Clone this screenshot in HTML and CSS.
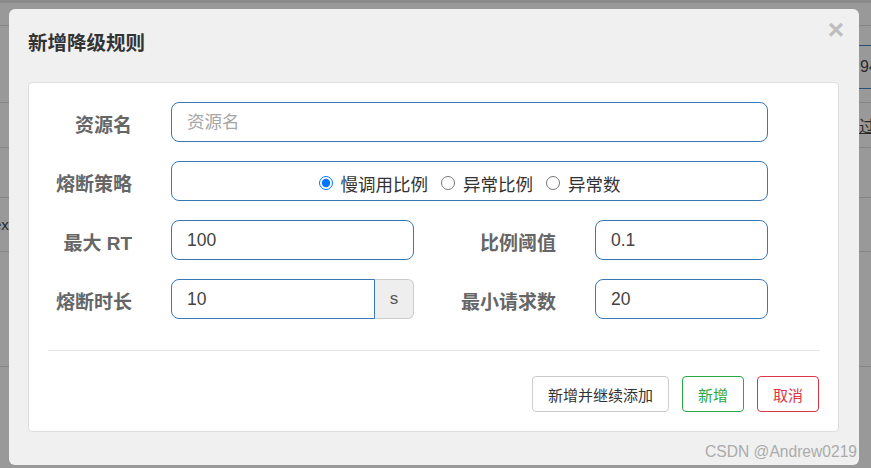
FILE: index.html
```html
<!DOCTYPE html>
<html lang="zh-CN">
<head>
<meta charset="utf-8">
<title>新增降级规则</title>
<link rel="stylesheet" href="styles.css">
</head>
<body>
<div class="page">
  <div class="bg">
    <div class="bg-strip"></div>
    <div class="bg-row h-a"></div>
    <div class="bg-row h-b"><span></span><span class="bg-box">94</span></div>
    <div class="bg-row h-c"><span></span><span class="bg-link">过</span></div>
    <div class="bg-row h-d"></div>
    <div class="bg-row h-e"><span class="bg-left">ex</span><span></span></div>
    <div class="bg-row h-f"></div>
    <div class="bg-row h-g"></div>
  </div>

  <div class="modal">
    <div class="modal-header">
      <h4 class="modal-title">新增降级规则</h4>
      <span class="close">×</span>
    </div>
    <div class="panel">
      <div class="form-grid">
        <label class="lbl">资源名</label>
        <input class="ctl span3" type="text" placeholder="资源名">

        <label class="lbl">熔断策略</label>
        <div class="ctl span3 radio-box">
          <label class="radio"><input type="radio" name="grade" checked><span>慢调用比例</span></label>
          <label class="radio"><input type="radio" name="grade"><span>异常比例</span></label>
          <label class="radio"><input type="radio" name="grade"><span>异常数</span></label>
        </div>

        <label class="lbl">最大 RT</label>
        <input class="ctl" type="text" value="100">
        <label class="lbl">比例阈值</label>
        <input class="ctl" type="text" value="0.1">

        <label class="lbl">熔断时长</label>
        <div class="input-group">
          <input class="ctl grp" type="text" value="10">
          <span class="addon">s</span>
        </div>
        <label class="lbl">最小请求数</label>
        <input class="ctl" type="text" value="20">
      </div>
      <hr class="divider">
      <div class="actions">
        <button class="btn btn-default" type="button">新增并继续添加</button>
        <button class="btn btn-success" type="button">新增</button>
        <button class="btn btn-danger" type="button">取消</button>
      </div>
    </div>
  </div>

  <div class="watermark">CSDN @Andrew0219</div>
</div>
</body>
</html>
```

FILE: styles.css
```css
html, body {
  margin: 0;
  padding: 0;
}
body {
  width: 871px;
  height: 468px;
  overflow: hidden;
  font-family: "Liberation Sans", "Noto Sans CJK SC", sans-serif;
}
.page {
  position: relative;
  width: 871px;
  height: 468px;
  overflow: hidden;
}

/* dimmed page behind the modal */
.bg {
  display: flex;
  flex-direction: column;
  height: 468px;
  background: #999999;
}
.bg-strip {
  height: 3px;
  background: #8a8a8a;
}
.bg-row {
  display: flex;
  justify-content: space-between;
  align-items: center;
  border-bottom: 1px solid #858585;
  font-size: 16px;
  color: #2a2a2a;
}
.h-a { height: 22px; }
.h-b { height: 76px; }
.h-c { height: 44px; }
.h-d { height: 49px; }
.h-e { height: 53px; }
.h-f { height: 114px; }
.h-g { flex: 1; border-bottom: none; }
.bg-box {
  display: flex;
  align-items: center;
  height: 42px;
  padding: 0 0 0 1px;
  width: 11px;
  overflow: hidden;
  border-top: 1px solid #2b5276;
  border-bottom: 1px solid #2b5276;
  margin-top: 6px;
}
.bg-link {
  width: 12px;
  overflow: hidden;
  text-decoration: underline;
  white-space: nowrap;
}
.bg-left {
  margin-left: -7px;
  font-size: 15px;
}

/* modal */
.modal {
  position: absolute;
  left: 9px;
  top: 9px;
  width: 850px;
  height: 456px;
  box-sizing: border-box;
  padding: 0 20px 0 19px;
  background: #f0f0f0;
  border-radius: 6px;
}
.modal-header {
  display: flex;
  justify-content: space-between;
  align-items: flex-start;
  height: 73px;
  box-sizing: border-box;
  padding-top: 20px;
}
.modal-title {
  margin: 0;
  font-family: "Noto Sans CJK SC", sans-serif;
  font-size: 19.5px;
  line-height: 26px;
  font-weight: 700;
  color: #333333;
}
.close {
  margin-top: -13px;
  margin-right: -5px;
  font-family: "Liberation Sans", sans-serif;
  font-size: 28px;
  font-weight: 700;
  line-height: 1;
  color: #bdbdbd;
}

.panel {
  background: #ffffff;
  border: 1px solid #dddddd;
  border-radius: 4px;
  padding: 19px 0 19px 0;
}

.form-grid {
  display: grid;
  grid-template-columns: 103px 243px 103px 173px;
  grid-auto-rows: 40px;
  column-gap: 39px;
  row-gap: 19px;
}
.lbl {
  display: flex;
  align-items: center;
  justify-content: flex-end;
  padding-top: 3px;
  font-family: "Liberation Sans", "Noto Sans CJK SC", sans-serif;
  font-size: 19px;
  font-weight: 700;
  color: #666666;
  white-space: nowrap;
}
.ctl {
  box-sizing: border-box;
  height: 40px;
  margin: 0;
  padding: 0 15px;
  border: 1px solid #3a78b5;
  border-radius: 8px;
  background: #ffffff;
  font-family: "Liberation Sans", "Noto Sans CJK SC", sans-serif;
  font-size: 17.5px;
  color: #444444;
  outline: none;
}
.ctl::placeholder {
  color: #a5a5a5;
}
.span3 {
  grid-column: span 3;
}
.radio-box {
  display: flex;
  justify-content: center;
  align-items: center;
  gap: 13px;
  padding-top: 4px;
}
.radio {
  display: flex;
  align-items: center;
  gap: 8px;
  font-family: "Noto Sans CJK SC", sans-serif;
  font-size: 17.5px;
  color: #333333;
}
.radio input {
  width: 14px;
  height: 14px;
  margin: 0;
}
.input-group {
  display: flex;
}
.ctl.grp {
  flex: 1;
  min-width: 0;
  border-radius: 8px 0 0 8px;
}
.addon {
  display: flex;
  align-items: center;
  justify-content: center;
  width: 39px;
  box-sizing: border-box;
  border: 1px solid #cccccc;
  border-left: none;
  border-radius: 0 6px 6px 0;
  background: #eeeeee;
  font-size: 17px;
  color: #555555;
}

.divider {
  margin: 31px 18px 0 19px;
  border: none;
  border-top: 1px solid #e5e5e5;
  height: 0;
}
.actions {
  display: flex;
  justify-content: flex-end;
  gap: 13px;
  margin-top: 25px;
  padding-right: 19px;
}
.btn {
  height: 36px;
  padding: 0 15px;
  border-radius: 4px;
  background: #ffffff;
  font-family: "Noto Sans CJK SC", sans-serif;
  font-size: 15px;
  cursor: pointer;
}
.btn-default {
  border: 1px solid #cccccc;
  color: #333333;
}
.btn-success {
  border: 1px solid #28a745;
  color: #28a745;
}
.btn-danger {
  border: 1px solid #dc3545;
  color: #dc3545;
}

.watermark {
  position: absolute;
  right: 14px;
  top: 443px;
  font-family: "Liberation Sans", sans-serif;
  font-size: 15.6px;
  color: #ababab;
  white-space: nowrap;
}
```
